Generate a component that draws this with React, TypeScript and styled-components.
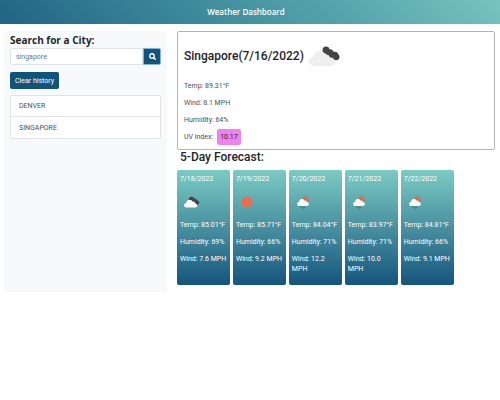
import React, { useState } from "react";
import styled, { createGlobalStyle } from "styled-components";

const GlobalStyle = createGlobalStyle`
  *, *::before, *::after { box-sizing: border-box; }
  body {
    margin: 0;
    background: #fff;
    color: #212529;
    font-family: Roboto, "Open Sans", sans-serif;
    font-size: 7px;
    line-height: 10px;
  }
  h1, h2, h3, p, ul { margin: 0; padding: 0; }
`;

const Header = styled.header`
  display: flex;
  align-items: center;
  justify-content: center;
  height: 24px;
  padding-right: 8px;
  color: #fff;
  background: linear-gradient(45deg, #216485, #4594a2 50%, #76c4be);
`;

const HeaderTitle = styled.h1`
  font-family: "Open Sans", sans-serif;
  font-size: 8px;
  line-height: 10px;
  font-weight: 600;
`;

const Layout = styled.div`
  display: grid;
  grid-template-columns: minmax(0, 163fr) minmax(0, 318fr);
  align-items: start;
  column-gap: 10px;
  padding: 7px 5px 0 4px;
`;

const Sidebar = styled.aside`
  min-height: 261px;
  padding: 2px 6px;
  background: #f8f9fb;
`;

const SearchLabel = styled.label`
  display: block;
  margin-bottom: 1px;
  font-family: "Open Sans", sans-serif;
  font-size: 10px;
  line-height: 14px;
  font-weight: 700;
`;

const SearchForm = styled.form`
  display: flex;
  height: 17px;
  margin-bottom: 7px;
`;

const SearchInput = styled.input`
  flex: 1;
  min-width: 0;
  padding: 0 5px;
  border: 1px solid #dfe3e7;
  border-radius: 2px 0 0 2px;
  background: #fff;
  color: #6c757d;
  font: inherit;
  outline: none;
`;

const SearchButton = styled.button`
  display: flex;
  align-items: center;
  justify-content: center;
  width: 18px;
  padding: 0;
  border: 1px solid #7fb2dc;
  border-radius: 0 2px 2px 0;
  background: #12537a;
  color: #fff;
`;

const ClearButton = styled.button`
  display: block;
  height: 17px;
  padding: 0 5px;
  border: 0;
  border-radius: 2px;
  background: #12537a;
  color: #fff;
  font: inherit;
`;

const History = styled.ul`
  margin-top: 6px;
  list-style: none;
  border: 1px solid #e1e4e7;
  border-radius: 2px;
  background: #fff;
`;

const HistoryItem = styled.li`
  padding: 5px 8px;
  color: #495057;

  & + & {
    padding-top: 6px;
    border-top: 1px solid #e1e4e7;
  }
`;

const Current = styled.section`
  min-height: 119px;
  padding: 12px 6px 4px;
  border: 1px solid #b0b4b7;
  border-radius: 2px;
  background: #fff;
`;

const CurrentHeading = styled.div`
  display: flex;
  align-items: center;
  gap: 5px;
  height: 24px;
  margin-bottom: 13px;
`;

const SectionTitle = styled.h2`
  font-size: 12px;
  line-height: 14px;
  font-weight: 500;
`;

const ForecastTitle = styled(SectionTitle)`
  margin: 0 0 6px 3px;
`;

const Reading = styled.p`
  margin-bottom: 7px;
  color: #495057;
`;

const UvReading = styled(Reading)`
  display: flex;
  align-items: center;
  gap: 4px;
  height: 10px;
  margin-bottom: 0;
`;

const UvBadge = styled.span`
  padding: 3px 3px;
  border-radius: 2px;
  background: #ee82ee;
  color: #212529;
`;

const ForecastGrid = styled.div`
  display: grid;
  grid-template-columns: repeat(5, minmax(0, 1fr));
  gap: 3px;
  width: 87%;
`;

const Card = styled.article`
  min-height: 115px;
  padding: 4px 3px;
  border-radius: 2px;
  background: linear-gradient(#7bcbc3, #15557d);
  color: #fff;
`;

const CardDate = styled.h3`
  font-size: 7px;
  line-height: 10px;
  font-weight: 400;
`;

const CardIcon = styled.div`
  height: 36px;
  padding: 12px 0 0 4px;
`;

const CardLine = styled.p`
  margin-bottom: 7px;

  &:last-child { margin-bottom: 0; }
`;

const Icon = styled.svg`
  display: block;
  flex: none;
`;

type Sky = "clouds" | "clear" | "rain";

const cloudPath =
  "M5 21c-3 0-5-1.800-5-4.400 0-2.500 1.800-4.300 4.300-4.600C4.600 8.300 7.500 5.500 11 5.500c2.800 0 4.900 1.500 6 3.700 3-.7 5.400 1.200 5.700 3.700 2.300.2 3.800 1.900 3.800 4 0 2.400-1.900 4.100-4.500 4.100z";

function CurrentIcon() {
  return (
    <Icon width="32" height="22" viewBox="0 0 32 22" aria-hidden="true">
      <path d={cloudPath} fill="#efefef" />
      <path
        d="M13.500 5c0-2 1.500-3.400 3.500-3.400 1.900 0 3.200 1.100 3.500 2.600 2-.3 3.700.8 4.200 2.800 2.400-.5 4.300.5 4.700 2.400.8.5 1.200 1.400 1.100 2.500-.1 2-1.500 3.300-3.300 3.300-1.700 0-3-.9-3.400-2.400-2 .2-3.600-.8-4-2.600-1.300.1-2.300-.4-2.900-1.400C15.200 8.500 13.500 7.100 13.500 5z"
        fill="#434345"
      />
    </Icon>
  );
}

function SkyIcon({ sky }: { sky: Sky }) {
  return (
    <Icon width="16" height="14" viewBox="0 0 32 28" aria-hidden="true">
      {sky === "clouds" && (
        <>
          <path
            d="M9 7c0-3 2.500-5.500 6-5.500 2.700 0 4.500 1.300 5.500 3.500 3-.3 4.800 1 5.200 3.300 3 .5 4.800 2.700 4.800 5.200 0 2.600-2 4.500-4.800 4.500L15 14z"
            fill="#434345"
          />
          <g transform="translate(0 2)">
            <path d={cloudPath} fill="#fafafa" />
          </g>
        </>
      )}
      {sky === "clear" && <circle cx="14" cy="12" r="11" fill="#ed6c4c" />}
      {sky === "rain" && (
        <>
          <circle cx="19" cy="7" r="6" fill="#ed6440" />
          <g transform="translate(2 1) scale(.9)">
            <path d={cloudPath} fill="#fafafa" />
          </g>
          <path d="M9 20l2 4M13 20l2 6M18 20l-2 4" stroke="#46606a" strokeWidth="1.500" />
        </>
      )}
    </Icon>
  );
}

const forecast: { date: string; sky: Sky; temp: string; humidity: string; wind: string }[] = [
  { date: "7/18/2022", sky: "clouds", temp: "85.01", humidity: "69", wind: "7.6" },
  { date: "7/19/2022", sky: "clear", temp: "85.71", humidity: "66", wind: "9.2" },
  { date: "7/20/2022", sky: "rain", temp: "84.04", humidity: "71", wind: "12.2" },
  { date: "7/21/2022", sky: "rain", temp: "83.97", humidity: "71", wind: "10.0" },
  { date: "7/22/2022", sky: "rain", temp: "84.81", humidity: "66", wind: "9.1" },
];

export default function App() {
  const [city, setCity] = useState("singapore");
  const [history, setHistory] = useState(["DENVER", "SINGAPORE"]);

  return (
    <>
      <GlobalStyle />
      <Header>
        <HeaderTitle>Weather Dashboard</HeaderTitle>
      </Header>
      <Layout>
        <Sidebar>
          <SearchLabel htmlFor="city">Search for a City:</SearchLabel>
          <SearchForm onSubmit={(e) => e.preventDefault()}>
            <SearchInput id="city" value={city} onChange={(e) => setCity(e.target.value)} />
            <SearchButton type="submit" aria-label="Search">
              <svg width="7" height="7" viewBox="0 0 14 14" fill="none" stroke="currentColor">
                <circle cx="6" cy="6" r="4.500" strokeWidth="2.600" />
                <path d="M9.500 9.500l3.500 3.500" strokeWidth="3" strokeLinecap="round" />
              </svg>
            </SearchButton>
          </SearchForm>
          <ClearButton type="button" onClick={() => setHistory([])}>
            Clear history
          </ClearButton>
          <History>
            {history.map((name) => (
              <HistoryItem key={name}>{name}</HistoryItem>
            ))}
          </History>
        </Sidebar>
        <main>
          <Current>
            <CurrentHeading>
              <SectionTitle>Singapore(7/16/2022)</SectionTitle>
              <CurrentIcon />
            </CurrentHeading>
            <Reading>Temp: 89.31°F</Reading>
            <Reading>Wind: 8.1 MPH</Reading>
            <Reading>Humidity: 64%</Reading>
            <UvReading>
              UV index: <UvBadge>10.17</UvBadge>
            </UvReading>
          </Current>
          <ForecastTitle>5-Day Forecast:</ForecastTitle>
          <ForecastGrid>
            {forecast.map((day) => (
              <Card key={day.date}>
                <CardDate>{day.date}</CardDate>
                <CardIcon>
                  <SkyIcon sky={day.sky} />
                </CardIcon>
                <CardLine>Temp: {day.temp}°F</CardLine>
                <CardLine>Humidity: {day.humidity}%</CardLine>
                <CardLine>Wind: {day.wind} MPH</CardLine>
              </Card>
            ))}
          </ForecastGrid>
        </main>
      </Layout>
    </>
  );
}
